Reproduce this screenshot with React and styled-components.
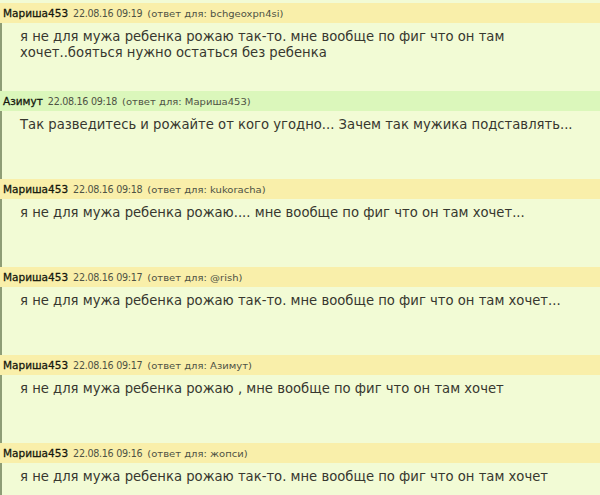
import styled, { createGlobalStyle } from 'styled-components';

const GlobalStyle = createGlobalStyle`
  html, body {
    margin: 0;
    padding: 0;
    background: #f2fbd5;
  }
`;

const comments = [
  {
    author: 'Мариша453',
    date: '22.08.16 09:19',
    reply: 'bchgeoxpn4si',
    text: 'я не для мужа ребенка рожаю так-то. мне вообще по фиг что он там хочет..бояться нужно остаться без ребенка',
  },
  {
    author: 'Азимут',
    date: '22.08.16 09:18',
    reply: 'Мариша453',
    text: 'Так разведитесь и рожайте от кого угодно... Зачем так мужика подставлять...',
    green: true,
  },
  {
    author: 'Мариша453',
    date: '22.08.16 09:18',
    reply: 'kukoracha',
    text: 'я не для мужа ребенка рожаю.... мне вообще по фиг что он там хочет...',
  },
  {
    author: 'Мариша453',
    date: '22.08.16 09:17',
    reply: '@rish',
    text: 'я не для мужа ребенка рожаю так-то. мне вообще по фиг что он там хочет...',
  },
  {
    author: 'Мариша453',
    date: '22.08.16 09:17',
    reply: 'Азимут',
    text: 'я не для мужа ребенка рожаю , мне вообще по фиг что он там хочет',
  },
  {
    author: 'Мариша453',
    date: '22.08.16 09:16',
    reply: 'жопси',
    text: 'я не для мужа ребенка рожаю так-то. мне вообще по фиг что он там хочет',
  },
];

const Page = styled.div`
  width: 600px;
  height: 495px;
  overflow: hidden;
  background: #f2fbd5;
  padding-top: 3px;
  box-sizing: border-box;
  font-family: 'DejaVu Sans', Verdana, sans-serif;
  color: #3a3a32;
`;

const Comment = styled.div`
  display: flex;
  flex-direction: column;
  height: 88px;
`;

const Head = styled.div`
  height: 20px;
  display: flex;
  align-items: center;
  gap: 5px;
  padding-left: 3px;
  background: ${(p) => (p.$green ? '#dbf7bb' : '#f9efaa')};
  white-space: nowrap;
`;

const Author = styled.span`
  font-size: 10.5px;
  font-weight: 500;
  color: #15180e;
  -webkit-text-stroke: 0.3px #15180e;
`;

const Date = styled.span`
  font-size: 9.6px;
  letter-spacing: -0.3px;
  color: #4e5244;
`;

const Reply = styled.span`
  font-size: 10px;
  color: #4e5244;
  transform: scaleY(0.9);
`;

const Body = styled.div`
  flex: 1;
  border-left: 2px solid #8e9d76;
  padding: 6px 10px 0 18px;
  font-size: 13.2px;
  line-height: 16px;
  color: #37372f;
`;

export default function App() {
  return (
    <>
      <GlobalStyle />
      <Page>
        {comments.map((c, i) => (
          <Comment key={i}>
            <Head $green={c.green}>
              <Author>{c.author}</Author>
              <Date>{c.date}</Date>
              <Reply>(ответ для: {c.reply})</Reply>
            </Head>
            <Body>{c.text}</Body>
          </Comment>
        ))}
      </Page>
    </>
  );
}
